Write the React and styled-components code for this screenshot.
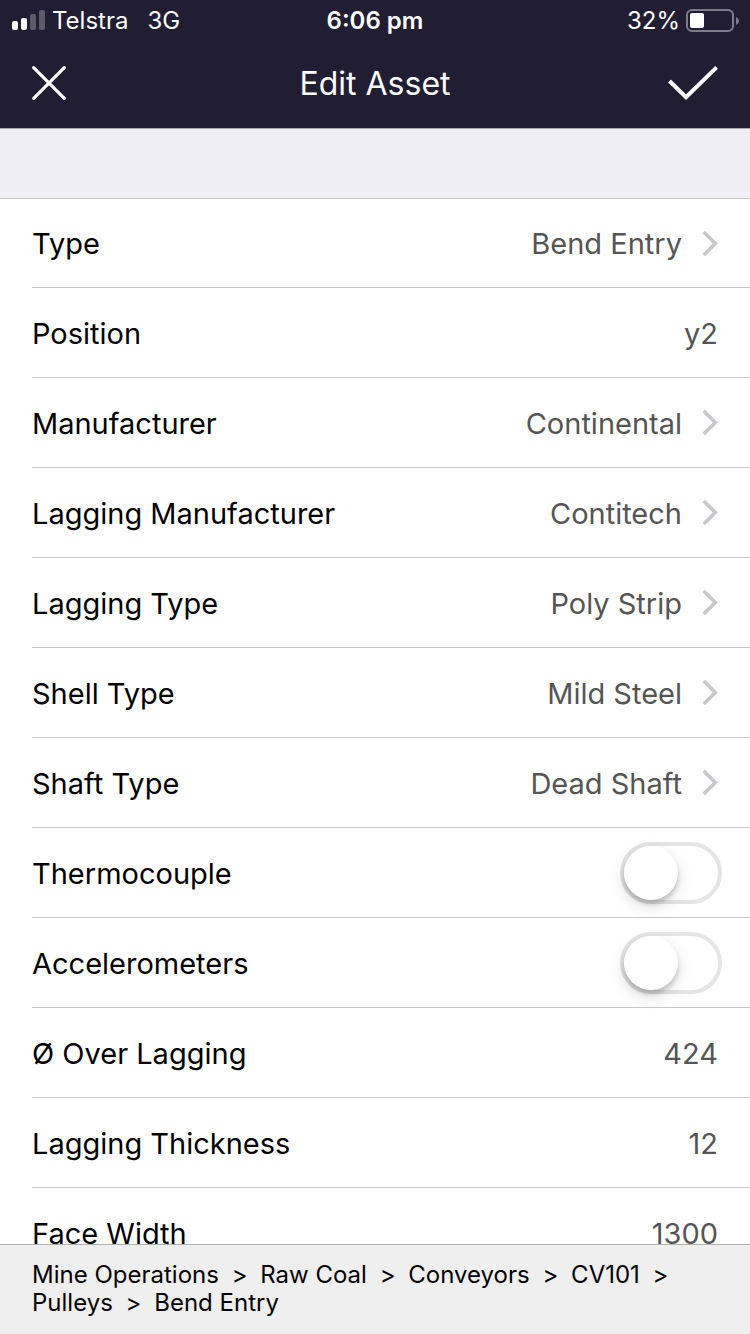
import React, { useState } from "react";
import styled, { createGlobalStyle, css } from "styled-components";

const GlobalStyle = createGlobalStyle`
  *, *::before, *::after { box-sizing: border-box; }
  body {
    margin: 0;
    background: #ffffff;
    color: #000000;
    font-family: Inter, "Liberation Sans", sans-serif;
    font-size: 29px;
  }
  button, input { font: inherit; color: inherit; }
`;

const Screen = styled.div`
  display: flex;
  flex-direction: column;
  height: 100vh;
`;

const Header = styled.header`
  flex: none;
  background: #211d32;
  color: #ffffff;
  border-bottom: 1px solid #a9a8ae;
`;

const StatusBar = styled.div`
  display: grid;
  grid-template-columns: 1fr auto 1fr;
  align-items: center;
  height: 40px;
  padding: 2px 11px 0;
  font-size: 24px;
  line-height: 38px;
`;

const StatusGroup = styled.div`
  display: flex;
  align-items: center;
  justify-content: ${({ $end }) => ($end ? "flex-end" : "flex-start")};
  gap: 6px;
`;

const Network = styled.span`
  margin-left: 13px;
`;

const Clock = styled.time`
  font-weight: 600;
`;

const NavBar = styled.div`
  display: grid;
  grid-template-columns: 1fr auto 1fr;
  align-items: center;
  height: 88px;
  padding: 0 32px;
`;

const Title = styled.h1`
  margin: 0;
  font-size: 32px;
  font-weight: 400;
  line-height: 40px;
`;

const IconButton = styled.button`
  display: flex;
  justify-self: ${({ $end }) => ($end ? "end" : "start")};
  padding: 0;
  border: 0;
  background: none;
  cursor: pointer;
`;

const Content = styled.main`
  flex: 1;
  min-height: 0;
  overflow: hidden auto;
  scrollbar-width: none;
`;

const SectionGap = styled.div`
  height: 69px;
  background: #efeef4;
`;

const List = styled.ul`
  margin: 0;
  padding: 0;
  list-style: none;
`;

const Item = styled.li`
  display: flex;
  height: 90px;
  padding-left: 32px;

  &:first-child { border-top: 1px solid #c8c7cc; }
`;

const rowStyle = css`
  flex: 1;
  display: flex;
  align-items: center;
  justify-content: space-between;
  min-width: 0;
  padding: 1px 32px 0 0;
  border: 0;
  border-bottom: 1px solid #c8c7cc;
  background: none;
  text-align: left;
`;

const LinkRow = styled.button`
  ${rowStyle}
  cursor: pointer;
`;

const FieldRow = styled.label`
  ${rowStyle}
`;

const SwitchRow = styled.label`
  ${rowStyle}
  padding-right: 28px;
`;

const Value = styled.span`
  display: flex;
  align-items: center;
  gap: 20px;
  color: #555555;
`;

const Field = styled.input`
  flex: 1;
  min-width: 0;
  padding: 0;
  border: 0;
  outline: 0;
  background: none;
  color: #555555;
  text-align: right;
`;

const Switch = styled.input`
  appearance: none;
  width: 102px;
  height: 62px;
  margin: 0;
  border: 4px solid #e5e5e5;
  border-radius: 31px;
  background: #ffffff;
  cursor: pointer;

  &::before {
    content: "";
    display: block;
    width: 54px;
    height: 54px;
    border-radius: 50%;
    background: #ffffff;
    box-shadow: 0 6px 16px rgba(0, 0, 0, 0.15), 0 4px 4px rgba(0, 0, 0, 0.16);
    transition: margin 0.2s;
  }

  &:checked { background: #4cd964; border-color: #4cd964; }
  &:checked::before { margin-left: 40px; }
`;

const Footer = styled.footer`
  flex: none;
  padding: 16px 32px 17px;
  border-top: 1px solid #b2b2b2;
  background: #efefef;
  font-size: 24px;
  line-height: 28px;
`;

const Crumb = styled.a`
  color: inherit;
  text-decoration: none;
`;

const Separator = styled.span`
  margin: 0 6px;
`;

const SignalIcon = () => (
  <svg width="35" height="22" viewBox="0 0 35 22" fill="#ffffff" aria-hidden="true">
    <rect x="1" y="11" width="6" height="9" rx="2" />
    <rect x="10" y="8" width="6" height="12" rx="2" />
    <rect x="19" y="4" width="6" height="16" rx="2" opacity="0.27" />
    <rect x="28" y="0" width="6" height="20" rx="2" opacity="0.27" />
  </svg>
);

const BatteryIcon = () => (
  <svg width="53" height="24" viewBox="0 0 53 24" aria-hidden="true">
    <rect x="1" y="1" width="46" height="21" rx="5" fill="none" stroke="#7f7c89" strokeWidth="2" />
    <rect x="4" y="4" width="14" height="15" rx="2" fill="#ffffff" />
    <path d="M50 8c1.500 .7 3 2 3 4s-1.500 3.300-3 4z" fill="#7f7c89" />
  </svg>
);

const CloseIcon = () => (
  <svg width="34" height="36" viewBox="0 0 34 36" fill="none" stroke="#ffffff" strokeWidth="3.200" strokeLinecap="round">
    <path d="M1.700 1.700 32.300 32.300M32.300 1.700 1.700 32.300" />
  </svg>
);

const CheckIcon = () => (
  <svg width="50" height="36" viewBox="0 0 50 36" fill="none" stroke="#ffffff" strokeWidth="4">
    <path d="M1.500 15 18 31.200 48.600 1.400" />
  </svg>
);

const ChevronIcon = () => (
  <svg width="16" height="26" viewBox="0 0 16 26" fill="none" stroke="#c7c7cc" strokeWidth="3.600" aria-hidden="true">
    <path d="M1.700 1 13.300 12.500 1.700 24" />
  </svg>
);

const rows = [
  { kind: "link", label: "Type", value: "Bend Entry" },
  { kind: "field", label: "Position", value: "y2" },
  { kind: "link", label: "Manufacturer", value: "Continental" },
  { kind: "link", label: "Lagging Manufacturer", value: "Contitech" },
  { kind: "link", label: "Lagging Type", value: "Poly Strip" },
  { kind: "link", label: "Shell Type", value: "Mild Steel" },
  { kind: "link", label: "Shaft Type", value: "Dead Shaft" },
  { kind: "switch", label: "Thermocouple" },
  { kind: "switch", label: "Accelerometers" },
  { kind: "field", label: "Ø Over Lagging", value: "424" },
  { kind: "field", label: "Lagging Thickness", value: "12" },
  { kind: "field", label: "Face Width", value: "1300" },
];

const crumbs = ["Mine Operations", "Raw Coal", "Conveyors", "CV101", "Pulleys", "Bend Entry"];

function Row({ kind, label, value }) {
  const [text, setText] = useState(value);
  const [on, setOn] = useState(false);

  if (kind === "link") {
    return (
      <LinkRow type="button">
        <span>{label}</span>
        <Value>
          {value}
          <ChevronIcon />
        </Value>
      </LinkRow>
    );
  }
  if (kind === "switch") {
    return (
      <SwitchRow>
        <span>{label}</span>
        <Switch type="checkbox" role="switch" checked={on} onChange={(e) => setOn(e.target.checked)} />
      </SwitchRow>
    );
  }
  return (
    <FieldRow>
      <span>{label}</span>
      <Field type="text" value={text} onChange={(e) => setText(e.target.value)} />
    </FieldRow>
  );
}

export default function App() {
  return (
    <Screen>
      <GlobalStyle />
      <Header>
        <StatusBar>
          <StatusGroup>
            <SignalIcon />
            <span>Telstra</span>
            <Network>3G</Network>
          </StatusGroup>
          <Clock>6:06 pm</Clock>
          <StatusGroup $end>
            <span>32%</span>
            <BatteryIcon />
          </StatusGroup>
        </StatusBar>
        <NavBar>
          <IconButton type="button" aria-label="Cancel">
            <CloseIcon />
          </IconButton>
          <Title>Edit Asset</Title>
          <IconButton type="button" aria-label="Save" $end>
            <CheckIcon />
          </IconButton>
        </NavBar>
      </Header>
      <Content>
        <SectionGap />
        <List>
          {rows.map((row) => (
            <Item key={row.label}>
              <Row {...row} />
            </Item>
          ))}
        </List>
      </Content>
      <Footer>
        <nav aria-label="Breadcrumb">
          {crumbs.map((name, i) => (
            <React.Fragment key={name}>
              <Crumb href="#">{name}</Crumb>
              {i < crumbs.length - 1 && (
                <>
                  {" "}
                  <Separator>&gt;</Separator>{" "}
                </>
              )}
            </React.Fragment>
          ))}
        </nav>
      </Footer>
    </Screen>
  );
}
